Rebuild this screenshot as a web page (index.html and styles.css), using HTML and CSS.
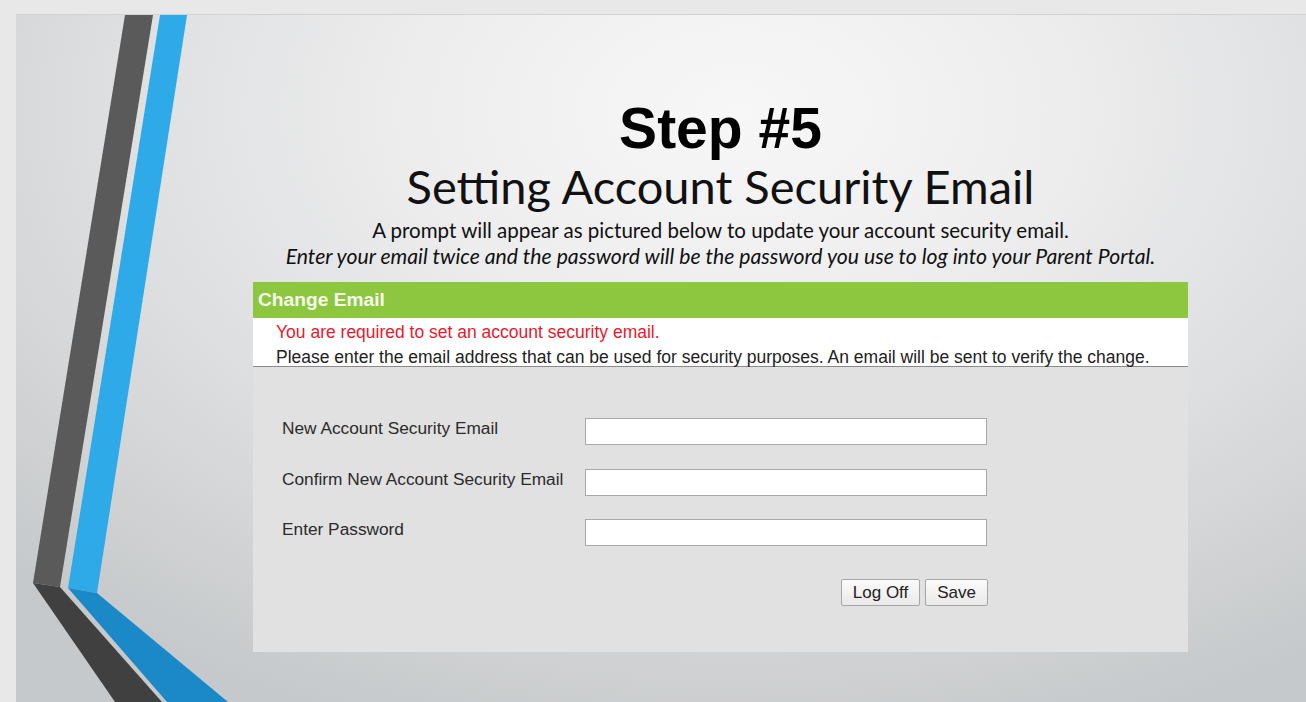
FILE: index.html
```html
<!DOCTYPE html>
<html lang="en">
<head>
<meta charset="utf-8">
<title>Step #5 - Setting Account Security Email</title>
<link rel="stylesheet" href="styles.css">
</head>
<body>
<div class="slide">
  <svg class="stripes" width="300" height="687" viewBox="16 15 300 687" aria-hidden="true">
    <polygon class="dark-up" points="125,15 153,15 60,587 33,583"/>
    <polygon class="dark-low" points="33,583 60,587 162,702 115,702"/>
    <polygon class="blue-up" points="160,15 187,15 97,593 68,588"/>
    <polygon class="blue-low" points="68,588 97,593 228,702 167,702"/>
  </svg>
  <main class="content">
    <h1 class="step">Step #5</h1>
    <h2 class="title">Setting Account Security Email</h2>
    <p class="lead">A prompt will appear as pictured below to update your account security email.</p>
    <p class="lead lead-italic">Enter your email twice and the password will be the password you use to log into your Parent Portal.</p>
    <section class="panel">
      <div class="panel-head">Change Email</div>
      <div class="panel-msg">
        <div class="msg-required">You are required to set an account security email.</div>
        <div class="msg-info">Please enter the email address that can be used for security purposes. An email will be sent to verify the change.</div>
      </div>
      <form class="panel-body" onsubmit="return false">
        <div class="fields">
          <label class="field-label" for="em1">New Account Security Email</label>
          <input class="field-input" id="em1" type="text">
          <label class="field-label" for="em2">Confirm New Account Security Email</label>
          <input class="field-input" id="em2" type="text">
          <label class="field-label" for="pw">Enter Password</label>
          <input class="field-input" id="pw" type="password">
        </div>
        <div class="actions">
          <button class="btn" type="button">Log Off</button>
          <button class="btn" type="button">Save</button>
        </div>
      </form>
    </section>
  </main>
</div>
</body>
</html>
```
FILE: styles.css
```css
html, body {
  margin: 0;
  padding: 0;
}
body {
  background: #e8e8e8;
  width: 1306px;
  height: 702px;
  overflow: hidden;
}
.slide {
  position: relative;
  margin: 14px 0 0 16px;
  height: 687px;
  border-top: 1px solid #d2d2d2;
  overflow: hidden;
  background: radial-gradient(ellipse 78% 95% at 56% 14%, #f7f7f7 0%, #eeeeef 30%, #dfe0e1 60%, #c6c9cb 100%);
}
.stripes {
  position: absolute;
  left: 0;
  top: 0;
}
.dark-up { fill: #5a5a5a; }
.dark-low { fill: #404040; }
.blue-up { fill: #2eaae9; }
.blue-low { fill: #1b88c8; }

.content {
  position: relative;
  margin-left: 237px;
  width: 935px;
  padding-top: 85px;
  text-align: center;
  color: #111;
}
.step {
  margin: 0;
  font-family: "Liberation Sans", Arial, sans-serif;
  font-weight: 700;
  font-size: 57px;
  line-height: 57px;
  color: #000;
}
.title {
  margin: 4px 0 0;
  font-family: Lato, "Open Sans", sans-serif;
  font-weight: 400;
  font-size: 47px;
  line-height: 50px;
  color: #111;
}
.lead {
  margin: 0;
  font-family: Lato, "Open Sans", sans-serif;
  font-size: 20.5px;
  line-height: 26px;
  color: #111;
  white-space: nowrap;
}
.title + .lead {
  margin-top: 6px;
}
.lead-italic {
  font-style: italic;
  font-size: 21.2px;
}

.panel {
  margin-top: 13px;
  text-align: left;
  font-family: "Liberation Sans", Arial, sans-serif;
}
.panel-head {
  height: 36px;
  line-height: 36px;
  padding-left: 5px;
  background: #8dc63f;
  color: #f6fbec;
  font-weight: 700;
  font-size: 19.2px;
}
.panel-msg {
  box-sizing: border-box;
  height: 49px;
  padding: 2px 0 0 23px;
  background: #fff;
  border-bottom: 1px solid #8a8a8a;
  box-shadow: 0 1px 0 #c9c9c9;
  font-size: 17.5px;
  line-height: 25px;
  white-space: nowrap;
}
.msg-required {
  color: #e8192c;
}
.msg-info {
  color: #222;
}
.panel-body {
  box-sizing: border-box;
  height: 285px;
  margin: 0;
  padding: 51px 0 0 29px;
  background: #e1e1e1;
}
.fields {
  display: grid;
  grid-template-columns: 303px 402px;
  row-gap: 23.5px;
}
.field-label {
  align-self: start;
  font-size: 17.3px;
  line-height: 20px;
  color: #2b2b2b;
}
.field-input {
  box-sizing: border-box;
  width: 402px;
  height: 27px;
  margin: 0;
  padding: 2px 4px;
  border: 1px solid #a9a9a9;
  border-radius: 0;
  background: #fff;
  font-family: "Liberation Sans", Arial, sans-serif;
  font-size: 16px;
}
.actions {
  display: flex;
  justify-content: flex-end;
  gap: 5px;
  width: 706px;
  margin-top: 33px;
}
.btn {
  box-sizing: border-box;
  height: 27px;
  margin: 0;
  padding: 0 11px;
  border: 1px solid #a6a6a6;
  border-radius: 2px;
  background: linear-gradient(#fbfbfb, #e9e9e9);
  color: #222;
  font-family: "Liberation Sans", Arial, sans-serif;
  font-size: 17px;
  line-height: 25px;
}
```
